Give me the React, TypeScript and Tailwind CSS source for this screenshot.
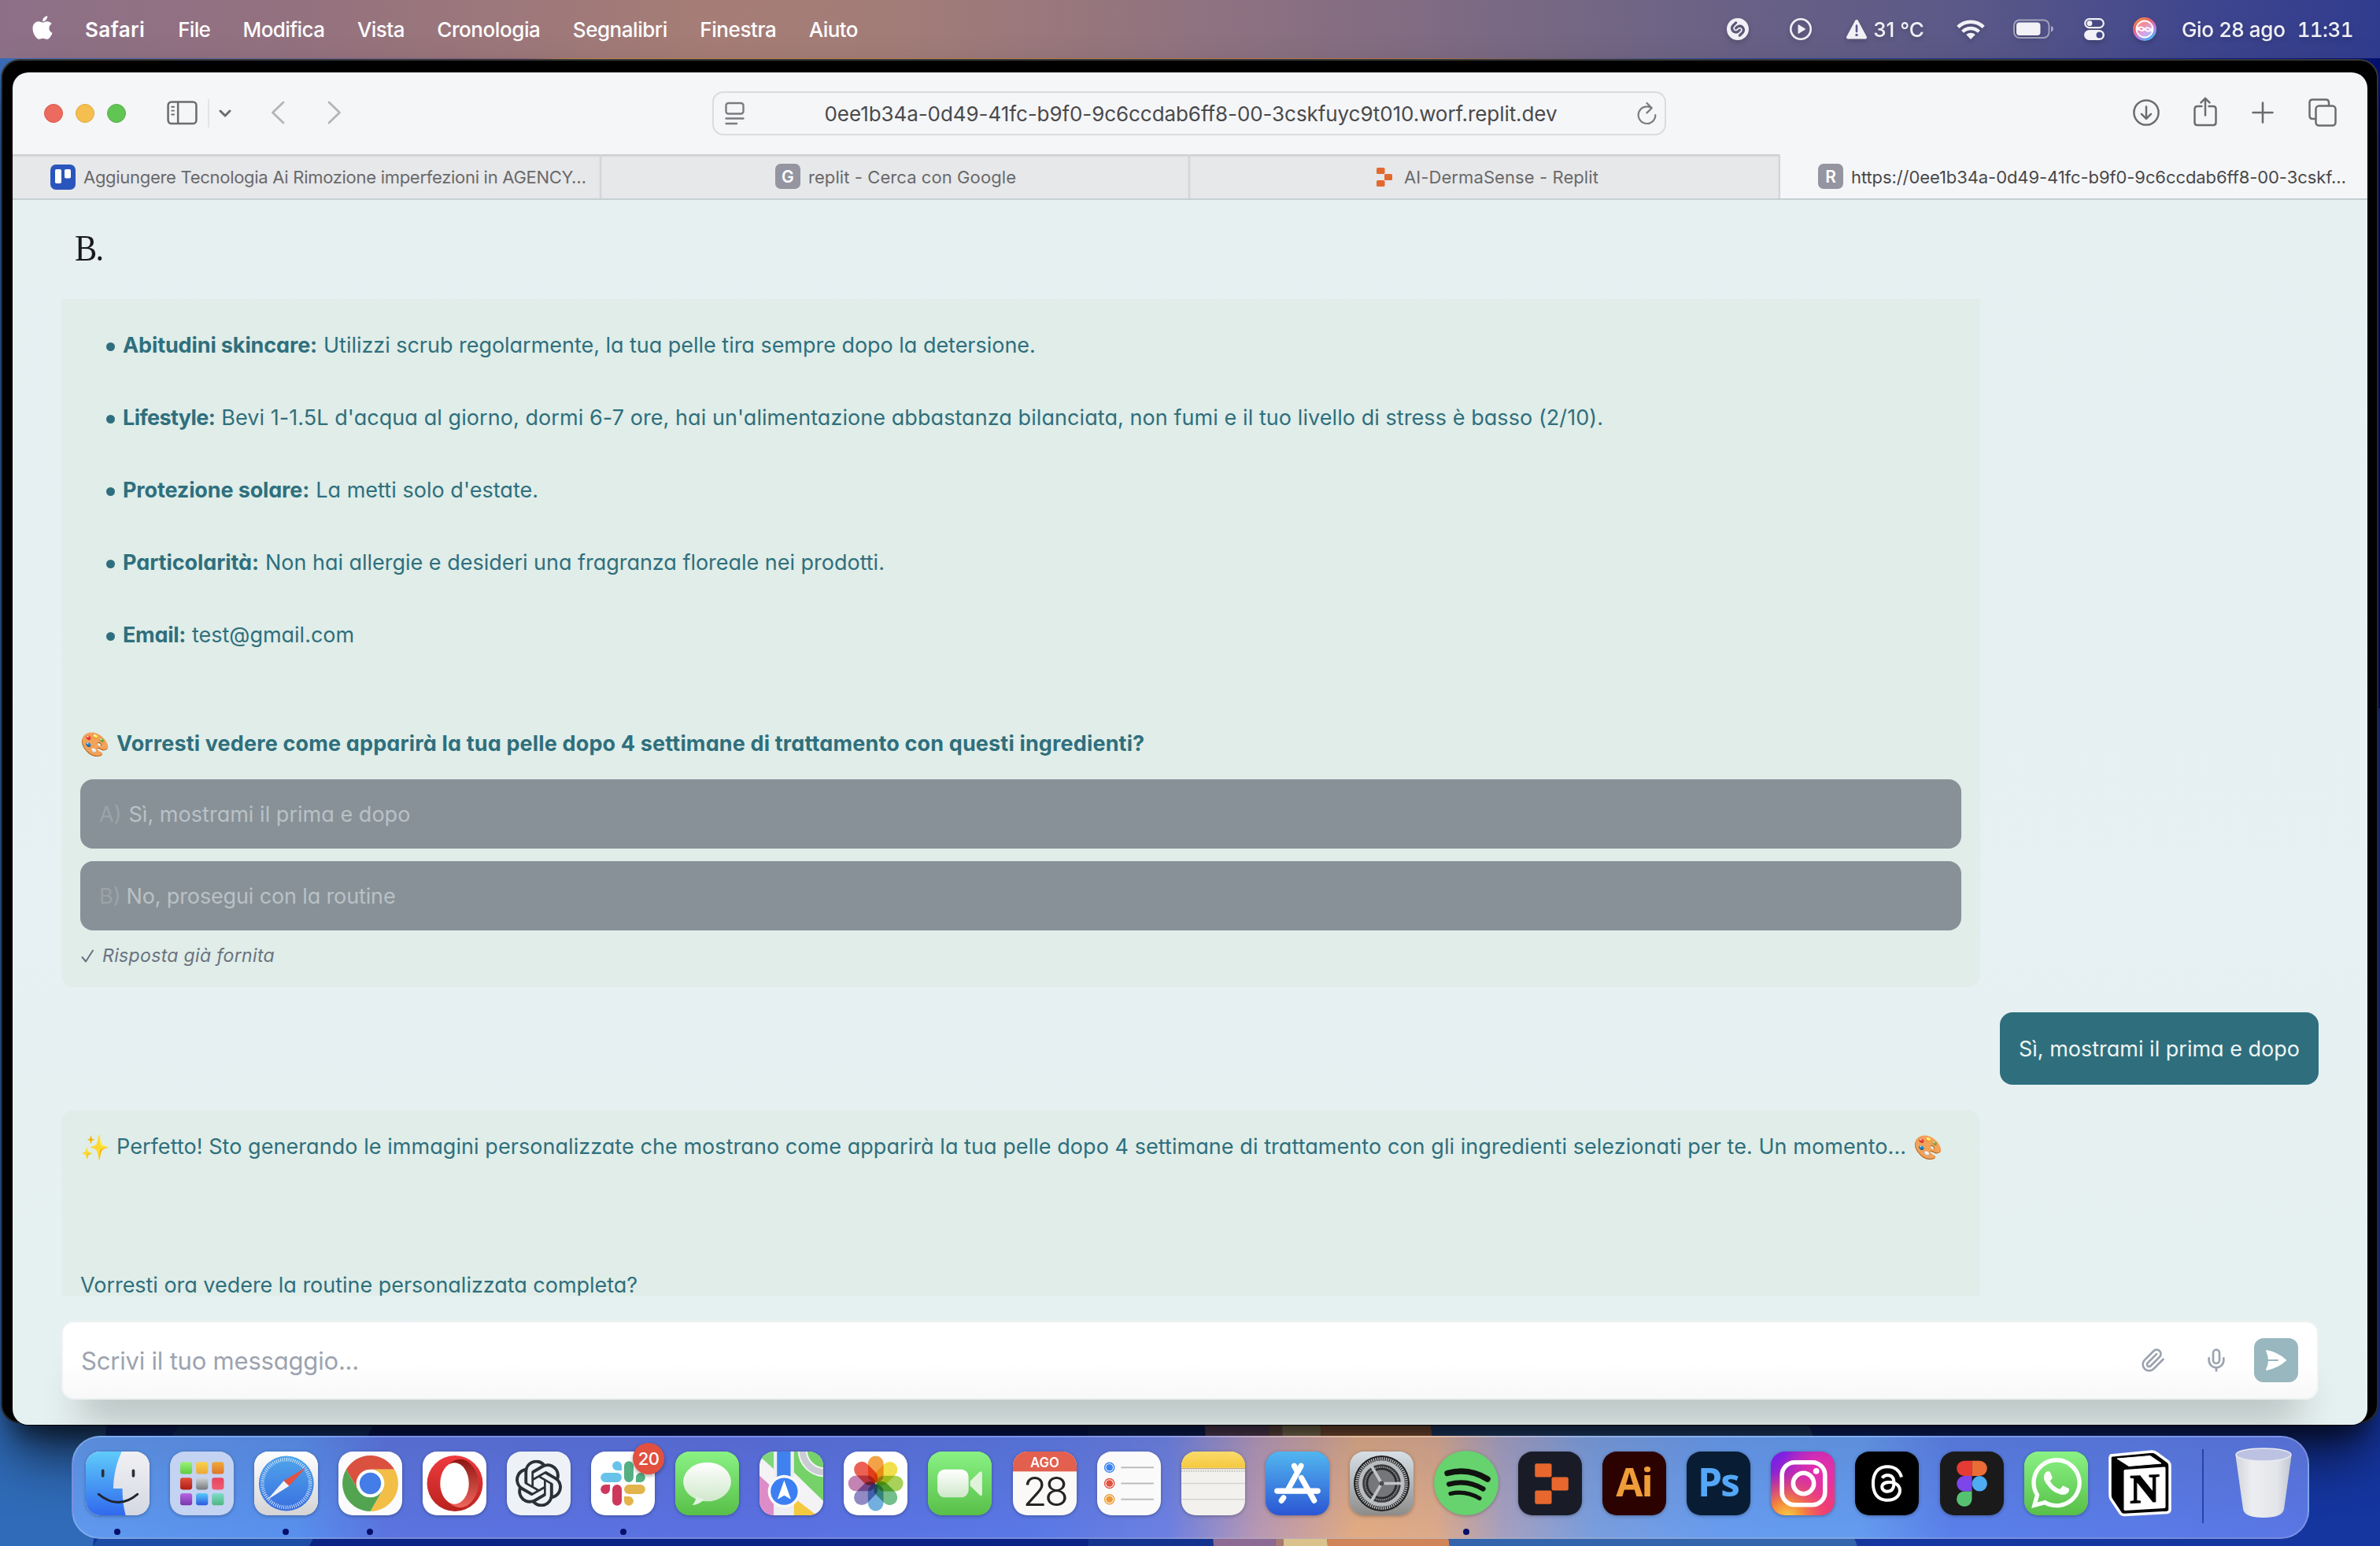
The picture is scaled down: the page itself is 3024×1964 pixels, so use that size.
import React from "react";
import type { ReactNode } from "react";
import { Mic } from "lucide-react";
import { FaApple, FaWhatsapp } from "react-icons/fa";
import { FaThreads } from "react-icons/fa6";
import { SiOpenai, SiShazam } from "react-icons/si";

/* ---------- menu bar ---------- */

const menus = [
  { label: "File", cls: "tracking-[-0.7px]" },
  { label: "Modifica", cls: "tracking-[-0.6px]" },
  { label: "Vista", cls: "tracking-[-0.55px]" },
  { label: "Cronologia", cls: "tracking-[-0.44px]" },
  { label: "Segnalibri", cls: "tracking-[-0.47px]" },
  { label: "Finestra", cls: "tracking-[-0.42px]" },
  { label: "Aiuto", cls: "tracking-[-0.6px]" },
];

function WifiIcon() {
  return (
    <svg className="h-[27px] w-[36px]" viewBox="0 0 36 27" fill="none" stroke="currentColor" strokeWidth="4.4">
      <path d="M1.8 10.4 A23 23 0 0 1 34.2 10.4" />
      <path d="M7.6 16.2 A14.8 14.8 0 0 1 28.4 16.2" />
      <path d="M18 26 L12.2 20 A8.3 8.3 0 0 1 23.8 20 Z" fill="currentColor" stroke="none" />
    </svg>
  );
}

function BatteryIcon() {
  return (
    <svg className="h-[26px] w-[52px]" viewBox="0 0 52 26" fill="none">
      <rect x="1" y="1.5" width="44.5" height="22.5" rx="7" stroke="currentColor" strokeOpacity=".5" strokeWidth="2" />
      <rect x="4" y="4.5" width="30.5" height="16.5" rx="4" fill="currentColor" />
      <path d="M48 9 V16.5 Q51 15.5 51 12.7 Q51 10 48 9" fill="currentColor" fillOpacity=".55" />
    </svg>
  );
}

function ControlCenterIcon() {
  return (
    <svg className="h-[28px] w-[26px]" viewBox="0 0 26 28" fill="none">
      <rect x="1.2" y="1.2" width="23.6" height="11" rx="5.5" stroke="currentColor" strokeWidth="2.2" />
      <circle cx="7" cy="6.7" r="3.4" fill="currentColor" />
      <rect x="0" y="15" width="26" height="13" rx="6.5" fill="currentColor" />
      <circle cx="19.5" cy="21.5" r="4" fill="#46498a" />
    </svg>
  );
}

function SiriIcon() {
  return (
    <svg className="h-[30px] w-[30px]" viewBox="0 0 30 30" fill="none">
      <defs>
        <linearGradient id="siri" x1="0" y1="0" x2=".6" y2="1">
          <stop offset="0" stopColor="#f2a23a" />
          <stop offset=".4" stopColor="#ea5d6a" />
          <stop offset=".7" stopColor="#c77be0" />
          <stop offset="1" stopColor="#4db5f2" />
        </linearGradient>
      </defs>
      <circle cx="15" cy="15" r="15" fill="url(#siri)" />
      <circle cx="15" cy="15" r="10.5" fill="#fff" fillOpacity=".3" stroke="#fff" strokeWidth="1.8" />
      <path d="M5 17 Q9 9 15 15 T25 13 M5 12 Q10 20 15 15 T25 19" stroke="#fff" strokeWidth="1.8" />
    </svg>
  );
}

function MenuBar() {
  return (
    <header className="relative flex h-[74px] items-center bg-[linear-gradient(90deg,#8d7088_0%,#93717f_12%,#a67d76_30%,#a27c78_38%,#8d7181_52%,#6e6485_70%,#5a5888_83%,#3e458e_93%,#303c8e_100%)] pl-[40px] text-[26px] font-medium text-white">
      <FaApple className="-mt-[4px] h-[34px] w-[28px]" />
      <span className="ml-[40px] font-semibold tracking-[0.4px]">Safari</span>
      <nav className="ml-[42px] flex gap-[41.5px]">
        {menus.map((m) => (
          <span key={m.label} className={m.cls}>{m.label}</span>
        ))}
      </nav>
      <div className="ml-auto flex items-center pr-[34px] text-[#f1f1f6] drop-shadow-[0_3px_3px_rgba(0,0,0,0.2)]">
        <SiShazam className="h-[28px] w-[28px]" />
        <svg className="ml-[52px] h-[28px] w-[28px]" viewBox="0 0 28 28" fill="none">
          <circle cx="14" cy="14" r="12.7" stroke="currentColor" strokeWidth="2.6" />
          <path d="M11 8.6 V19.4 L19.8 14 Z" fill="currentColor" stroke="currentColor" strokeLinejoin="round" />
        </svg>
        <svg className="ml-[43px] h-[26px] w-[28px]" viewBox="0 0 28 26">
          <path d="M14 3 L25 23.5 H3 Z" fill="currentColor" stroke="currentColor" strokeWidth="4" strokeLinejoin="round" />
          <path d="M14 8.5 V16" stroke="#57568a" strokeWidth="2.6" strokeLinecap="round" />
          <circle cx="14" cy="20.4" r="1.7" fill="#57568a" />
        </svg>
        <span className="ml-[7px]">31 °C</span>
        <div className="ml-[41px]"><WifiIcon /></div>
        <div className="ml-[36px]"><BatteryIcon /></div>
        <div className="ml-[38px]"><ControlCenterIcon /></div>
        <div className="ml-[36px]"><SiriIcon /></div>
        <span className="ml-[32px] tracking-[-0.28px]">Gio 28 ago</span>
        <span className="ml-[15px] tracking-[-0.6px] tabular-nums">11:31</span>
      </div>
    </header>
  );
}

/* ---------- browser chrome ---------- */

function Toolbar() {
  return (
    <div className="flex h-[104px] shrink-0 items-center bg-[#f5f6f8] pl-[40px] text-[#6c6c6e]">
      <div className="flex gap-[16px]">
        <i className="size-[24px] rounded-full border border-[#d8584c] bg-[#ed6a5e]" />
        <i className="size-[24px] rounded-full border border-[#dfa93c] bg-[#f4bf4f]" />
        <i className="size-[24px] rounded-full border border-[#52b045] bg-[#61c554]" />
      </div>
      <svg className="-mt-[2px] ml-[52px] h-[31px] w-[39px]" viewBox="0 0 40 32" fill="none" stroke="currentColor" strokeWidth="2.6">
        <rect x="1.5" y="1.5" width="37" height="28.5" rx="4.5" />
        <path d="M14.5 1.5 V30" />
        <path d="M5.5 8 H10 M5.5 13 H10 M5.5 18 H10" strokeWidth="2" />
      </svg>
      <div className="ml-[13px] h-[36px] w-[2px] bg-[#e3e4e6]" />
      <svg className="ml-[12px] h-[10px] w-[16px]" viewBox="0 0 16 10" fill="none" stroke="currentColor" strokeWidth="3" strokeLinecap="round" strokeLinejoin="round">
        <path d="M2 2 L8 8 L14 2" />
      </svg>
      <svg className="-mt-[2px] ml-[50px] h-[30px] w-[18px]" viewBox="0 0 18 30" fill="none" stroke="#b4b5b8" strokeWidth="2.8" strokeLinecap="round" strokeLinejoin="round">
        <path d="M16 2 L2.5 15 L16 28" />
      </svg>
      <svg className="-mt-[2px] ml-[54px] h-[30px] w-[18px]" viewBox="0 0 18 30" fill="none" stroke="#b4b5b8" strokeWidth="2.8" strokeLinecap="round" strokeLinejoin="round">
        <path d="M2 2 L15.5 15 L2 28" />
      </svg>
      <div className="ml-[471px] flex h-[56px] w-[1212px] items-center justify-between rounded-[14px] border-2 border-[#d9dbde] px-[14px]">
        <svg className="h-[30px] w-[25px]" viewBox="0 0 25 30" fill="none" stroke="#7b7c7f" strokeWidth="2.4" strokeLinecap="round">
          <rect x="1.5" y="2" width="22" height="13.5" rx="3" />
          <path d="M1.5 21.5 H23.5 M1.5 28 H15" />
        </svg>
        <span className="pt-[2px] text-[26px] leading-none tracking-[-0.076px] text-[#4a4a4c]">
          0ee1b34a-0d49-41fc-b9f0-9c6ccdab6ff8-00-3cskfuyc9t010.worf.replit.dev
        </span>
        <svg className="-mr-[4px] h-[30px] w-[25px]" viewBox="0 0 25 30" fill="none" stroke="#7b7c7f" strokeWidth="2.2" strokeLinecap="round" strokeLinejoin="round">
          <path d="M18.5 8.2 A10.8 10.8 0 1 0 23.3 17.2 M12.5 2 L18.8 8.2 L12.5 14.4" />
        </svg>
      </div>
      <div className="-mt-[2px] ml-auto flex items-center pr-[39px]">
        <svg className="h-[34px] w-[34px]" viewBox="0 0 34 34" fill="none" stroke="currentColor" strokeWidth="2.5" strokeLinecap="round" strokeLinejoin="round">
          <circle cx="17" cy="17" r="15.6" />
          <path d="M17 9.5 V24.5 M11 18.8 L17 24.8 L23 18.8" />
        </svg>
        <svg className="-mt-[2px] ml-[43px] h-[38px] w-[30px]" viewBox="0 0 30 38" fill="none" stroke="currentColor" strokeWidth="2.5" strokeLinecap="round" strokeLinejoin="round">
          <path d="M10.5 12 H5 Q1.5 12 1.5 15.5 V32.5 Q1.5 36 5 36 H25 Q28.5 36 28.5 32.5 V15.5 Q28.5 12 25 12 H19.5 M15 23.5 V2 M9.5 7.3 L15 1.8 L20.5 7.3" />
        </svg>
        <svg className="ml-[44px] h-[28px] w-[28px]" viewBox="0 0 28 28" fill="none" stroke="currentColor" strokeWidth="2.6" strokeLinecap="round">
          <path d="M14 1.5 V26.5 M1.5 14 H26.5" />
        </svg>
        <svg className="ml-[44px] h-[36px] w-[36px]" viewBox="0 0 36 36" fill="none" stroke="currentColor" strokeWidth="2.5" strokeLinejoin="round">
          <rect x="9.5" y="9.5" width="25" height="25" rx="4" />
          <path d="M9 26 H5.5 Q1.5 26 1.5 22 V5.5 Q1.5 1.5 5.5 1.5 H22 Q26 1.5 26 5.5 V9" />
        </svg>
      </div>
    </div>
  );
}

function LetterIcon({ letter }: { letter: string }) {
  return (
    <span className="flex size-[32px] items-center justify-center rounded-[7px] bg-[#9495a0] text-[21px] leading-none font-semibold text-white">
      {letter}
    </span>
  );
}

function TabBar() {
  const idle = "flex items-center border-r-2 border-[#d3d5d8] text-[#69696b] shadow-[inset_0_3px_3px_-1px_rgba(0,0,0,0.14)]";
  return (
    <div className="flex h-[58px] shrink-0 border-b-2 border-[#c5d0d2] bg-[#e7e8ea] text-[22px] leading-none">
      <div className={idle + " w-[748px] pl-[48px]"}>
        <svg className="mt-[1px] size-[32px]" viewBox="0 0 32 32">
          <rect width="32" height="32" rx="7" fill="#2a55bd" />
          <rect x="6" y="6" width="8" height="18" rx="1.8" fill="#fff" />
          <rect x="18" y="6" width="8" height="11.5" rx="1.8" fill="#fff" />
        </svg>
        <span className="ml-[10px] pt-[2px] tracking-[-0.29px]">Aggiungere Tecnologia Ai Rimozione imperfezioni in AGENCY…</span>
      </div>
      <div className={idle + " w-[748px] justify-center pl-[2px]"}>
        <LetterIcon letter="G" />
        <span className="ml-[10px] pt-[2px] tracking-[0.08px]">replit - Cerca con Google</span>
      </div>
      <div className={idle + " w-[750px] justify-center pl-[8px]"}>
        <svg className="mt-[1px] h-[24px] w-[20px]" viewBox="0 0 20 24" fill="#e26a2f">
          <rect x="0" y="0" width="10.5" height="8" rx="1.5" />
          <rect x="10" y="8" width="10" height="8" rx="1.5" />
          <rect x="0" y="16" width="10.5" height="8" rx="1.5" />
        </svg>
        <span className="ml-[15px] pt-[2px] tracking-[0.09px]">AI-DermaSense - Replit</span>
      </div>
      <div className="flex flex-1 items-center bg-[#f5f6f8] pl-[48px] text-[#48484a]">
        <LetterIcon letter="R" />
        <span className="ml-[10px] pt-[2px] tracking-[-0.087px]">https://0ee1b34a-0d49-41fc-b9f0-9c6ccdab6ff8-00-3cskf…</span>
      </div>
    </div>
  );
}

/* ---------- chat page ---------- */

const facts = [
  { title: "Abitudini skincare:", text: "Utilizzi scrub regolarmente, la tua pelle tira sempre dopo la detersione.", ta: "tracking-[-0.12px]", tb: "tracking-[-0.03px]" },
  { title: "Lifestyle:", text: "Bevi 1-1.5L d'acqua al giorno, dormi 6-7 ore, hai un'alimentazione abbastanza bilanciata, non fumi e il tuo livello di stress è basso (2/10).", ta: "tracking-[-0.6px]", tb: "tracking-[0.07px]" },
  { title: "Protezione solare:", text: "La metti solo d'estate.", ta: "tracking-[-0.14px]", tb: "tracking-[0.04px]" },
  { title: "Particolarità:", text: "Non hai allergie e desideri una fragranza floreale nei prodotti.", ta: "tracking-[-0.07px]", tb: "tracking-[-0.02px]" },
  { title: "Email:", text: "test@gmail.com", ta: "tracking-[-0.28px]", tb: "tracking-[-0.02px]" },
];

const options = [
  { key: "A)", text: "Sì, mostrami il prima e dopo", cls: "tracking-[0.03px]", gap: "mr-[9px]" },
  { key: "B)", text: "No, prosegui con la routine", cls: "tracking-[-0.14px]", gap: "mr-[7px]" },
];

function ChatPage() {
  return (
    <main className="flex min-h-0 flex-1 flex-col bg-[linear-gradient(180deg,#e7f0f1_0%,#e7f0f2_60%,#e5f1f0_100%)] px-[62px] text-[27px] [font-feature-settings:'cv11']">
      <div className="flex h-[126px] shrink-0 items-center pl-[17px] font-['Liberation_Serif',serif] text-[47px] tracking-[-2px] text-[#191919]">
        <span className="-mt-[4px] origin-left scale-x-90">B.</span>
      </div>
      <section className="flex h-[1266px] min-h-0 shrink-0 flex-col overflow-hidden text-[#2f6f7d]">
        <article className="flex h-[874px] w-[2438px] shrink-0 flex-col rounded-b-[16px] bg-[#e0ede8] px-[24px]">
          <ul className="mt-[13px] flex flex-col pl-[33px]">
            {facts.map((f) => (
              <li key={f.title} className="flex h-[92px] items-center whitespace-pre">
                <i className="mt-[3px] mr-[10px] size-[11px] rounded-full bg-[#2f6f7d]" />
                <span className={"font-[680] " + f.ta}>{f.title}</span>
                <span className={"ml-[8px] font-[380] " + f.tb}>{f.text}</span>
              </li>
            ))}
          </ul>
          <p className="mt-[64px] flex h-[56px] items-center font-[680]">
            <span className="mr-[9px] text-[30px]">🎨</span>
            <span className="tracking-[0.15px]">Vorresti vedere come apparirà la tua pelle dopo 4 settimane di trattamento con questi ingredienti?</span>
          </p>
          <div className="mt-[17px] flex flex-col gap-[16px]">
            {options.map((o) => (
              <div key={o.key} className="flex h-[88px] items-center rounded-[16px] bg-[#889198] px-[24px] pt-[2px] font-[380] text-[#b9c1c5]">
                <span className={"text-[#9ba3a9] " + o.gap}>{o.key}</span>
                <span className={o.cls}>{o.text}</span>
              </div>
            ))}
          </div>
          <p className="mt-[12px] flex h-[40px] items-center text-[23px] font-[380] text-[#6b7280] italic">
            <svg className="mr-[10px] ml-[1px] h-[17px] w-[17px]" viewBox="0 0 17 17" fill="none" stroke="currentColor" strokeWidth="2" strokeLinecap="round" strokeLinejoin="round">
              <path d="M1.5 10 L6 15.5 L15 1.5" />
            </svg>
            <span className="tracking-[0.35px]">Risposta già fornita</span>
          </p>
        </article>
        <div className="mt-[32px] flex h-[92px] shrink-0 items-center self-end rounded-[16px] bg-[#2f6f7d] px-[24px] pt-[2px] font-[380] text-[#eef5f5]">
          <span>Sì, mostrami il prima e dopo</span>
        </div>
        <article className="mt-[32px] flex h-[400px] w-[2438px] shrink-0 flex-col rounded-[16px] bg-[#e0ede8] px-[24px] pt-[19px] font-[380]">
          <p className="flex h-[56px] items-center whitespace-pre">
            <span className="mr-[9px] text-[30px]">✨</span>
            <span className="tracking-[0.056px]">Perfetto! Sto generando le immagini personalizzate che mostrano come apparirà la tua pelle dopo 4 settimane di trattamento con gli ingredienti selezionati per te. Un momento...</span>
            <span className="ml-[9px] text-[30px]">🎨</span>
          </p>
          <p className="mt-[120px] flex h-[56px] items-center tracking-[-0.03px]">Vorresti ora vedere la routine personalizzata completa?</p>
        </article>
      </section>
      <form className="mt-[32px] flex h-[100px] shrink-0 items-center rounded-[16px] border-2 border-[#eff2f3] bg-[linear-gradient(180deg,#ffffff_0%,#ffffff_55%,#f8f8f8_100%)] pr-[24px] pl-[23px] text-[#9ca3af] shadow-[0_50px_50px_-24px_rgba(0,0,0,0.22)]">
        <span className="pt-[2px] text-[31px] font-[370] tracking-[-0.2px]">Scrivi il tuo messaggio...</span>
        <svg className="ml-auto size-[32px]" viewBox="0 0 24 24" fill="none" stroke="currentColor" strokeWidth="2" strokeLinecap="round" strokeLinejoin="round">
          <path d="m21.44 11.05-9.19 9.19a6 6 0 0 1-8.49-8.49l8.57-8.57A4 4 0 1 1 18 8.84l-8.59 8.57a2 2 0 0 1-2.83-2.83l8.49-8.48" />
        </svg>
        <Mic className="ml-[48px] size-[32px]" />
        <span className="ml-[32px] flex size-[56px] items-center justify-center rounded-[12px] bg-[#98b7bf]">
          <svg className="h-[28px] w-[28px]" viewBox="0 0 28 28">
            <path d="M1.8 1.8 Q16 4.5 26.4 14 Q16 23.5 1.8 26.2 Q4.8 20 4.9 14 Q4.8 8 1.8 1.8 Z" fill="#fff" stroke="#fff" strokeWidth="1.6" strokeLinejoin="round" />
            <path d="M4 14 H16" stroke="#98b7bf" strokeWidth="2" strokeLinecap="round" />
          </svg>
        </span>
      </form>
    </main>
  );
}

/* ---------- dock ---------- */

function Tile({ children, fill }: { children?: ReactNode; fill: string }) {
  return (
    <svg className="size-[81px] overflow-visible drop-shadow-[0_1px_2px_rgba(0,0,0,0.3)]" viewBox="0 0 80 80">
      <defs>
        <clipPath id="squircle"><rect width="80" height="80" rx="18" /></clipPath>
      </defs>
      <rect width="80" height="80" rx="18" fill={fill} />
      <g clipPath="url(#squircle)">{children}</g>
    </svg>
  );
}

function Grad({ id, from, to, x2 = 0, y2 = 1 }: { id: string; from: string; to: string; x2?: number; y2?: number }) {
  return (
    <linearGradient id={id} x1="0" y1="0" x2={x2} y2={y2}>
      <stop offset="0" stopColor={from} />
      <stop offset="1" stopColor={to} />
    </linearGradient>
  );
}

const Finder = () => (
  <Tile fill="#e6e7eb">
    <defs><Grad id="fi" from="#5fcbfa" to="#3069ee" /><Grad id="fi2" from="#f1f1f3" to="#d4d8e2" /></defs>
    <rect width="80" height="80" fill="url(#fi2)" />
    <path d="M0 0 H45 C38 16 35 30 34.5 46.5 H46 C46 60 47.5 70 50 80 H0 Z" fill="url(#fi)" />
    <path d="M21.4 24 V30.5 M59.7 24 V30.5" stroke="#2b3038" strokeWidth="3.6" strokeLinecap="round" />
    <path d="M16 53.5 Q41 74 65 53.5" stroke="#20242c" strokeWidth="2.8" strokeLinecap="round" fill="none" />
  </Tile>
);

const padColors = [
  ["#9bf07a", "#5ecb3e"], ["#f8d24a", "#eda838"], ["#eeaa3c", "#de7428"],
  ["#e2503c", "#b01e18"], ["#cfd3d8", "#77797c"], ["#e8445e", "#ee5f74"],
  ["#b765e0", "#7a34b0"], ["#55c8fa", "#2a58e0"], ["#7edcc8", "#4fb682"],
];

const Launchpad = () => (
  <Tile fill="#c4d3f1">
    <defs>{padColors.map((c, i) => <Grad key={i} id={"lp" + i} from={c[0]} to={c[1]} />)}</defs>
    {padColors.map((_, i) => (
      <rect key={i} x={12.8 + (i % 3) * 19.9} y={13.2 + Math.floor(i / 3) * 19.6} width="15" height="15" rx="3" fill={"url(#lp" + i + ")"} />
    ))}
  </Tile>
);

const Safari = () => (
  <Tile fill="#fff">
    <defs><Grad id="sfb" from="#ffffff" to="#d4d4d4" /><Grad id="sf" from="#4fa5ea" to="#3a6fe0" /></defs>
    <rect width="80" height="80" fill="url(#sfb)" />
    <circle cx="40.3" cy="40" r="34.5" fill="url(#sf)" />
    <circle cx="40.3" cy="40" r="30" fill="none" stroke="#fff" strokeOpacity=".85" strokeWidth="4.5" strokeDasharray="0.9 1.718" />
    <path d="M64.7 20 L43.8 43.2 L37 36.8 Z" fill="#e8503f" />
    <path d="M16.5 60.5 L37 36.8 L43.8 43.2 Z" fill="#f3f3f3" />
  </Tile>
);

const Chrome = () => (
  <Tile fill="#fbfbfd">
    <path d="M9.7 22.5 A35 35 0 0 1 70.3 22.5 H40 A17.5 17.5 0 0 0 24.8 48.75 Z" fill="#da5140" />
    <path d="M40 22.5 H70.3 A35 35 0 0 1 40 75 L55.2 48.75 A17.5 17.5 0 0 0 40 22.5" fill="#f2be45" />
    <path d="M9.7 22.5 L24.8 48.75 A17.5 17.5 0 0 0 55.2 48.75 L40 75 A35 35 0 0 1 9.7 22.5" fill="#53a451" />
    <circle cx="40" cy="40" r="17" fill="#fff" />
    <circle cx="40" cy="40" r="13.5" fill="#457de8" />
  </Tile>
);

const Opera = () => (
  <Tile fill="#fff">
    <defs><Grad id="op" from="#f03a3e" to="#b8221d" /><Grad id="op2" from="#8e1712" to="#f0655c" /></defs>
    <circle cx="40.5" cy="40" r="35" fill="url(#op)" />
    <path d="M33 16 Q44 6 56 12 A35 35 0 0 1 56 68 Q44 74 33 64 Z" fill="url(#op2)" />
    <ellipse cx="40" cy="40" rx="18" ry="26" fill="#fff" />
  </Tile>
);

const ChatGPT = () => (
  <Tile fill="#eef2f6">
    <SiOpenai x="10.5" y="10.5" size={59} color="#2b3036" />
  </Tile>
);

const slackArm =
  "M8.834 5.042a2.528 2.528 0 0 1-2.521-2.52A2.528 2.528 0 0 1 8.834 0a2.528 2.528 0 0 1 2.521 2.522v2.52z M8.834 6.313a2.528 2.528 0 0 1 2.521 2.521 2.528 2.528 0 0 1-2.521 2.521H2.522A2.528 2.528 0 0 1 0 8.834a2.528 2.528 0 0 1 2.522-2.521z";

const Slack = () => (
  <div className="relative">
    <Tile fill="#fff">
      <g transform="translate(12 12) scale(2.333)">
        <path d={slackArm} fill="#67c3ea" />
        <path d={slackArm} fill="#54b083" transform="rotate(90 12 12)" />
        <path d={slackArm} fill="#e2b44b" transform="rotate(180 12 12)" />
        <path d={slackArm} fill="#ce375c" transform="rotate(270 12 12)" />
      </g>
    </Tile>
    <span className="absolute -top-[11px] left-[53px] flex size-[40px] items-center justify-center rounded-full bg-[#e2503f] text-[22px] leading-none font-medium tracking-[-0.5px] text-white shadow-[0_2px_5px_rgba(0,0,0,0.35)]">20</span>
  </div>
);

const Messages = () => (
  <Tile fill="#6fdc66">
    <defs><Grad id="ms" from="#89f284" to="#58bf48" /><Grad id="ms2" from="#ffffff" to="#cfe8ca" /></defs>
    <rect width="80" height="80" fill="url(#ms)" />
    <ellipse cx="40" cy="38" rx="30" ry="24.5" fill="url(#ms2)" />
    <path d="M26 56 Q26 63 21 67 Q30 67 36 60 Z" fill="#e3f3e0" />
  </Tile>
);

const Maps = () => (
  <Tile fill="#f3f3f5">
    <path d="M0 0 H18 V22 L0 6 Z" fill="#7fd77a" />
    <path d="M43 0 H80 V62 L43 26 Z" fill="#74d268" />
    <path d="M0 30 L18 47 V80 H0 Z" fill="#de8cc8" />
    <path d="M43 58 L72 80 H43 Z" fill="#f3c93f" />
    <circle cx="82" cy="-2" r="28" fill="none" stroke="#f3f3f5" strokeWidth="12" />
    <circle cx="82" cy="-2" r="28" fill="none" stroke="#c9ccd3" strokeWidth="8" />
    <rect x="18" width="25" height="80" fill="#eceef2" />
    <rect x="22" width="17" height="50" fill="#3f82ef" />
    <circle cx="31" cy="50" r="20.5" fill="#f7f7f9" />
    <circle cx="31" cy="50" r="17" fill="#3b7ff3" />
    <path d="M31 36 L39.5 60 L31 55 L22.5 60 Z" fill="#fff" />
  </Tile>
);

const petals = ["#f29a38", "#f0dd3c", "#9fcd4a", "#67b980", "#66a8dc", "#8880bf", "#bf7aac", "#ec5447"];

const Photos = () => (
  <Tile fill="#fff">
    {petals.map((c, i) => (
      <rect key={c} x="30.5" y="5.5" width="19.5" height="34" rx="9.7" fill={c} fillOpacity=".92" className="mix-blend-multiply" transform={"rotate(" + i * 45 + " 40.2 40)"} />
    ))}
  </Tile>
);

const FaceTime = () => (
  <Tile fill="#6fdc66">
    <rect width="80" height="80" fill="url(#ms)" />
    <rect x="12" y="22.5" width="39" height="35" rx="9" fill="url(#ms2)" />
    <path d="M53 37 L65 25.5 Q68 23.5 68 27.5 V53 Q68 57 65 54.5 L53 43 Z" fill="#e0f2dc" />
  </Tile>
);

const Calendar = () => (
  <Tile fill="#faf9f8">
    <rect width="80" height="25" fill="#e3604f" />
    <text x="40" y="19.5" textAnchor="middle" fontSize="16.5" fontWeight="600" fill="#fff">AGO</text>
    <text x="39.5" y="68" textAnchor="middle" fontSize="50" fontWeight="300" letterSpacing="-3.5" fill="#242424">28</text>
  </Tile>
);

const Reminders = () => (
  <Tile fill="#fafafa">
    {["#3a82f0", "#e2503f", "#ec9a34"].map((c, i) => (
      <g key={c}>
        <circle cx="15.5" cy={20 + i * 20} r="6" fill="#fff" stroke={c} strokeWidth="1.4" />
        <circle cx="15.5" cy={20 + i * 20} r="4.3" fill={c} />
        <path d={"M30 " + (20 + i * 20) + " H71"} stroke="#bcbcbe" strokeWidth="2" />
      </g>
    ))}
  </Tile>
);

const Notes = () => (
  <Tile fill="#f2f1ed">
    <defs><Grad id="nt" from="#fadb6a" to="#f5c83f" /></defs>
    <rect width="80" height="20.5" fill="url(#nt)" />
    <path d="M0 21.3 H80" stroke="#b9a98a" strokeWidth="1.3" />
    <path d="M0 24.5 H80" stroke="#bbb" strokeWidth="1.8" strokeDasharray="1.5 1.5" />
    <path d="M0 40 H80 M0 60 H80" stroke="#d4d4d6" strokeWidth="1.6" />
  </Tile>
);

const AppStore = () => (
  <Tile fill="#3d8ee8">
    <defs><Grad id="as" from="#52b6ef" to="#2b56d4" /></defs>
    <rect width="80" height="80" fill="url(#as)" />
    <g stroke="#fff" strokeWidth="7" strokeLinecap="round">
      <path d="M44.5 18 L28 48 M22.5 58 L20 61.5 M14.5 49.5 H65.5" />
      <path d="M36 18 L39 23.5 M45 33 L61 61.5" />
    </g>
  </Tile>
);

const Settings = () => (
  <Tile fill="#b9bdc1">
    <defs><Grad id="st" from="#d7e0e7" to="#8d8c8a" /></defs>
    <rect width="80" height="80" fill="url(#st)" />
    <circle cx="40" cy="40" r="35" fill="#1f1f20" />
    <circle cx="40" cy="40" r="31" fill="none" stroke="#b2b4b6" strokeWidth="4" strokeDasharray="1.5 1.2" />
    <circle cx="40" cy="40" r="26.5" fill="#3a3b3d" stroke="#b9bcbf" strokeWidth="5" />
    <circle cx="40" cy="40" r="18.5" fill="#747679" stroke="#2a2a2b" strokeWidth="3" />
    <circle cx="40" cy="40" r="20.5" fill="none" stroke="#8f9295" strokeWidth="2" strokeDasharray="1.4 1.1" />
    <path d="M40 40 H66 M40 40 L27 17.5 M40 40 L27 62.5" stroke="#c3c6c8" strokeWidth="3.6" />
    <circle cx="40" cy="40" r="3" fill="#4a4b4d" />
  </Tile>
);

const Spotify = () => (
  <svg className="size-[82px] shrink-0 drop-shadow-[0_1px_2px_rgba(0,0,0,0.3)]" viewBox="0 0 82 82" fill="none" stroke="#10130f" strokeLinecap="round">
    <circle cx="41" cy="41" r="41" fill="#66d36f" stroke="none" />
    <path d="M17 28.5 Q44 21 68 36" strokeWidth="7.5" />
    <path d="M19 42.5 Q42 36 62.5 48.5" strokeWidth="6.2" />
    <path d="M21 54.5 Q40 50 58 60.5" strokeWidth="5.2" />
  </svg>
);

const Replit = () => (
  <Tile fill="#191c27">
    <g fill="#e8672e">
      <rect x="21" y="15" width="21" height="17" rx="2" />
      <rect x="42" y="32" width="21" height="17" rx="2" />
      <rect x="21" y="49" width="21" height="17" rx="2" />
    </g>
  </Tile>
);

const Adobe = ({ label, bg, fg }: { label: string; bg: string; fg: string }) => (
  <Tile fill={bg}>
    <text x="39.5" y="56.5" textAnchor="middle" fontFamily="Open Sans" fontSize="49" fontWeight="700" letterSpacing="-2" fill={fg}>{label}</text>
  </Tile>
);

const Instagram = () => (
  <Tile fill="#d6349a">
    <defs>
      <Grad id="ig" from="#6a1cf5" to="#ee3a78" x2={0.7} y2={0.8} />
      <radialGradient id="ig2" cx=".25" cy="1.05" r=".75">
        <stop offset="0" stopColor="#f8d548" />
        <stop offset=".35" stopColor="#f58a3a" />
        <stop offset="1" stopColor="#ee3a70" stopOpacity="0" />
      </radialGradient>
      <radialGradient id="ig3" cx=".75" cy=".3" r=".6">
        <stop offset="0" stopColor="#e72fb0" />
        <stop offset="1" stopColor="#e72fb0" stopOpacity="0" />
      </radialGradient>
    </defs>
    <rect width="80" height="80" fill="url(#ig)" />
    <rect width="80" height="80" fill="url(#ig3)" />
    <rect width="80" height="80" fill="url(#ig2)" />
    <g fill="none" stroke="#fff" strokeWidth="5.5">
      <rect x="14" y="13.5" width="54" height="53.5" rx="16" />
      <circle cx="41" cy="40" r="13" />
    </g>
    <circle cx="57" cy="24.5" r="3.8" fill="#fff" />
  </Tile>
);

const Threads = () => (
  <Tile fill="#000"><FaThreads x="16" y="15.5" size={49} color="#fff" /></Tile>
);

const Figma = () => (
  <Tile fill="#1b1a1a">
    <path d="M40 11.5 H30.5 A9.6 9.6 0 0 0 30.5 30.7 H40 Z" fill="#e63a34" />
    <path d="M40 11.5 H49.5 A9.6 9.6 0 0 1 49.5 30.7 H40 Z" fill="#ea6c37" />
    <path d="M40 30.7 H30.5 A9.6 9.6 0 0 0 30.5 49.9 H40 Z" fill="#7d45ea" />
    <circle cx="49.6" cy="40.3" r="9.6" fill="#4fabf2" />
    <path d="M40 49.9 H30.5 A9.6 9.6 0 1 0 40 59.5 Z" fill="#55c271" />
  </Tile>
);

const WhatsApp = () => (
  <Tile fill="#6fdc66">
    <rect width="80" height="80" fill="url(#ms)" />
    <FaWhatsapp x="4.5" y="3.5" size={72} color="#fbfdfb" />
  </Tile>
);

const Notion = () => (
  <svg className="size-[80px] overflow-visible" viewBox="0 0 80 80">
    <path d="M3 5 L55 0 Q58 0 61 2 L76 13 Q78 15 78 18 V74 Q78 77 74 77.5 L20 80.5 Q17 80.5 15 78 L3 60 Q2 58 2 55 V8 Q2 5 5 5 Z" fill="#000" stroke="#fff" strokeWidth="3.5" strokeLinejoin="round" />
    <path d="M11 9 L53 5.5 L67 15 L26 18.5 Z" fill="#fff" stroke="#fff" strokeLinejoin="round" />
    <path d="M21 24.5 L71 21 V70.5 L21 73.5 Z" fill="#fff" stroke="#fff" strokeWidth="3" strokeLinejoin="round" />
    <text x="46" y="65" textAnchor="middle" fontFamily="Liberation Serif" fontSize="52" fontWeight="700" fill="#000" stroke="#000" strokeWidth="1.2" transform="skewY(-3) translate(0 2)">N</text>
  </svg>
);

const Trash = () => (
  <svg className="h-[90px] w-[72px]" viewBox="0 0 72 90">
    <defs>
      <linearGradient id="tr" x1="0" y1="0" x2="1" y2="0">
        <stop offset="0" stopColor="#d3d5dc" />
        <stop offset=".3" stopColor="#eceef1" />
        <stop offset=".75" stopColor="#e3e5ea" />
        <stop offset="1" stopColor="#c3c6d0" />
      </linearGradient>
    </defs>
    <path d="M.5 10 L10 78 Q12 89 36 89 Q60 89 62 78 L71.5 10 Z" fill="url(#tr)" />
    <ellipse cx="36" cy="9" rx="35" ry="8" fill="#bcc3e2" stroke="#e9ebf2" strokeWidth="1.5" />
  </svg>
);

const apps: { name: string; icon: ReactNode; running?: boolean }[] = [
  { name: "finder", icon: <Finder />, running: true },
  { name: "launchpad", icon: <Launchpad /> },
  { name: "safari", icon: <Safari />, running: true },
  { name: "chrome", icon: <Chrome />, running: true },
  { name: "opera", icon: <Opera /> },
  { name: "chatgpt", icon: <ChatGPT /> },
  { name: "slack", icon: <Slack />, running: true },
  { name: "messages", icon: <Messages /> },
  { name: "maps", icon: <Maps /> },
  { name: "photos", icon: <Photos /> },
  { name: "facetime", icon: <FaceTime /> },
  { name: "calendar", icon: <Calendar /> },
  { name: "reminders", icon: <Reminders /> },
  { name: "notes", icon: <Notes /> },
  { name: "appstore", icon: <AppStore /> },
  { name: "settings", icon: <Settings /> },
  { name: "spotify", icon: <Spotify />, running: true },
  { name: "replit", icon: <Replit /> },
  { name: "illustrator", icon: <Adobe label="Ai" bg="#2c0201" fg="#f09c38" /> },
  { name: "photoshop", icon: <Adobe label="Ps" bg="#081d34" fg="#54a7f8" /> },
  { name: "instagram", icon: <Instagram /> },
  { name: "threads", icon: <Threads /> },
  { name: "figma", icon: <Figma /> },
  { name: "whatsapp", icon: <WhatsApp /> },
  { name: "notion", icon: <Notion /> },
];

function Dock() {
  return (
    <footer className="absolute bottom-[9px] left-[91px] flex h-[131px] w-[2843px] rounded-[36px] border-2 border-white/20 bg-[linear-gradient(180deg,rgba(60,70,110,0.16)_0%,rgba(60,70,110,0)_100%),linear-gradient(90deg,#5f99ee_0%,#5890ee_10%,#5b74e0_14%,#5a70e2_30%,#5a78e6_43%,#6c80e2_49%,#b898b4_53%,#e2ab82_57.5%,#ddaa8a_61%,#a6a0c0_64%,#7a9ede_68%,#669cf0_74%,#649cf0_80%,#5a80ea_84%,#5a76e4_100%)] pt-[18px] pl-[16px]">
      <div className="flex gap-[27.1px]">
        {apps.map((a) => (
          <div key={a.name} className="flex h-[106px] w-[80px] flex-col items-center justify-between">
            <div className="flex h-[80px] items-center">{a.icon}</div>
            {a.running ? <i className="size-[8px] rounded-full bg-[#060f6b]" /> : null}
          </div>
        ))}
      </div>
      <div className="mt-[-3px] ml-[39px] h-[94px] w-[2px] bg-[#2a43a8]" />
      <div className="mt-[-5px] ml-[40px]"><Trash /></div>
    </footer>
  );
}

/* ---------- desktop ---------- */

function Wallpaper() {
  return (
    <svg className="absolute inset-0 h-[1964px] w-[3024px]" viewBox="0 0 3024 1964">
      <defs>
        <linearGradient id="sky" x1="0" y1="0" x2="1" y2="0">
          <stop offset="0" stopColor="#3a6cb8" />
          <stop offset=".22" stopColor="#8a5f80" />
          <stop offset=".24" stopColor="#c08a4a" />
          <stop offset=".6" stopColor="#b5764a" />
          <stop offset=".72" stopColor="#2a50a0" />
          <stop offset="1" stopColor="#061070" />
        </linearGradient>
      </defs>
      <rect width="3024" height="900" fill="url(#sky)" />
      <rect y="900" width="3024" height="1064" fill="#15359f" />
      <path d="M0 100 H90 V900 H240 L118 1964 H0 Z" fill="#2f6bb8" />
      <path d="M235 1800 H480 L393 1964 H118 Z" fill="#1d4ca4" />
      <path d="M480 1800 H1383 V1964 H393 Z" fill="#0c2386" />
      <path d="M1383 1800 H1530 L1542 1964 H1383 Z" fill="#14338e" />
      <path d="M1530 1800 H1611 L1621 1964 H1542 Z" fill="#8c6a94" />
      <path d="M1611 1800 H1629 L1631 1964 H1621 Z" fill="#a97a72" />
      <path d="M1629 1800 H1677 L1687 1964 H1631 Z" fill="#d9c28c" />
      <path d="M1677 1800 H1816 L1842 1964 H1687 Z" fill="#cf8558" />
      <path d="M1816 1800 H2294 L2360 1964 H1842 Z" fill="#3464ac" />
    </svg>
  );
}

export default function App() {
  return (
    <div className="relative h-[1964px] w-[3024px] overflow-hidden font-['Inter',sans-serif]">
      <Wallpaper />
      <MenuBar />
      <div className="absolute top-[75px] left-[1px] h-[1733px] w-[3021px] rounded-[24px] border-2 border-[#3a3a3c] bg-black" />
      <div className="absolute top-[92px] left-[16px] flex h-[1718px] w-[2992px] flex-col overflow-hidden rounded-[20px] shadow-[0_0_0_1px_rgba(0,0,0,0.9),0_14px_24px_rgba(0,0,0,0.4),0_36px_70px_rgba(0,0,0,0.7)]">
        <Toolbar />
        <TabBar />
        <ChatPage />
      </div>
      <Dock />
    </div>
  );
}
